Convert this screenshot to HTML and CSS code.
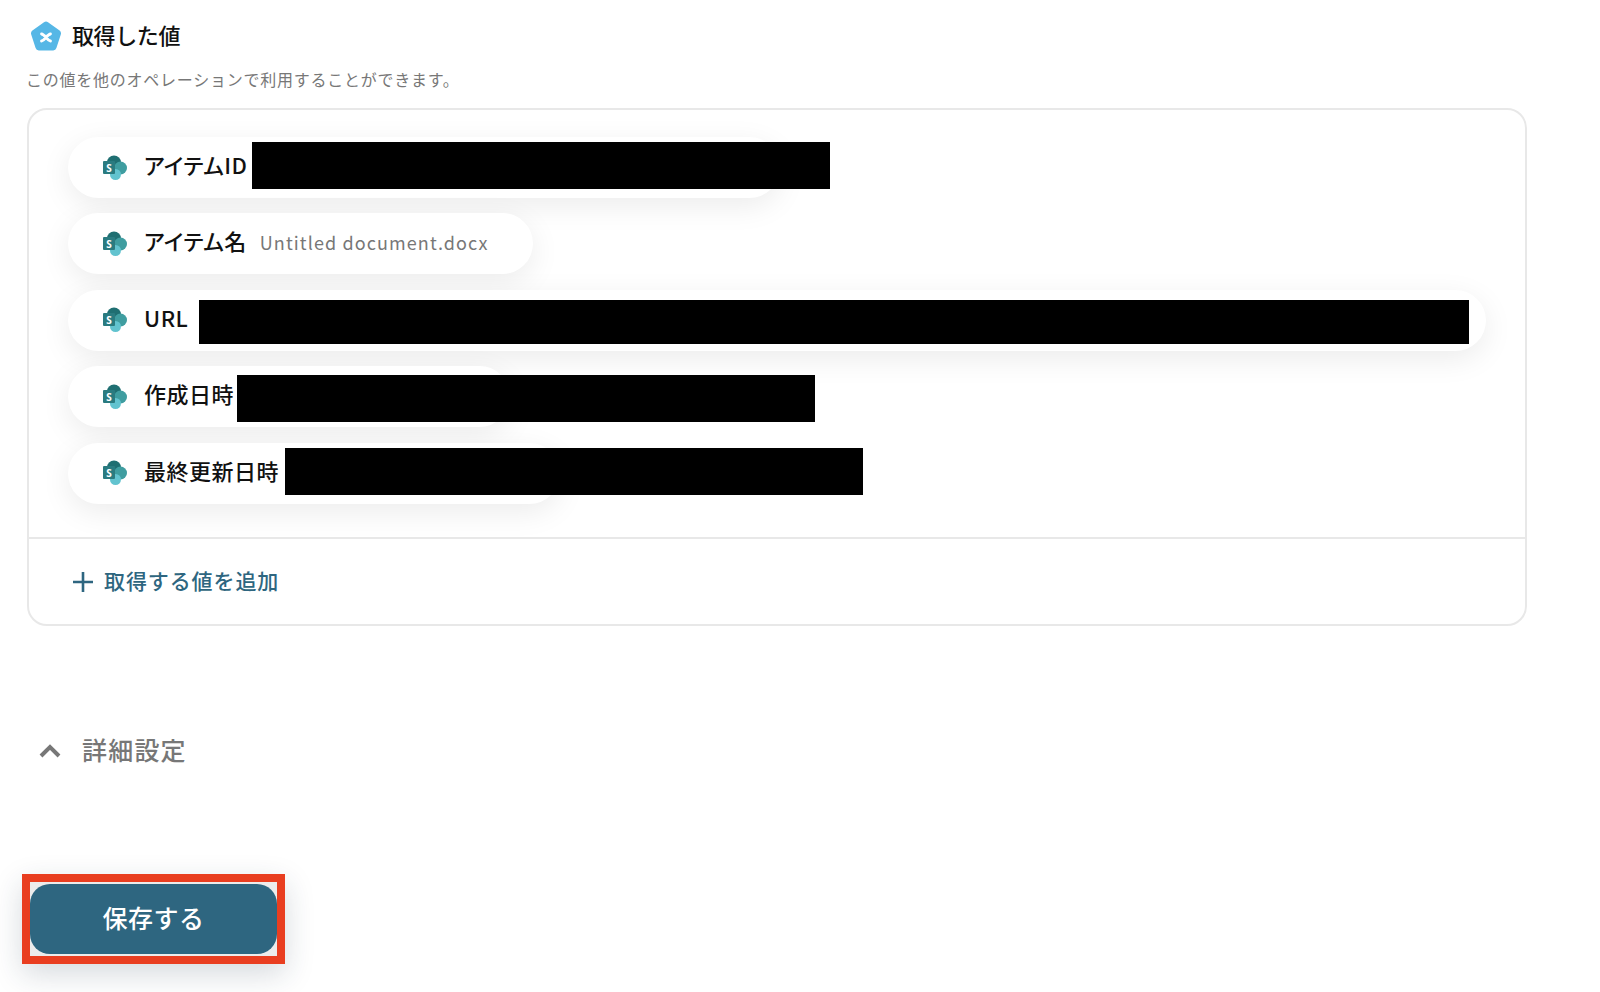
FILE: index.html
```html
<!doctype html>
<html lang="ja">
<head>
    <meta charset="utf-8">
    <title>取得した値</title>
    <link rel="stylesheet" href="styles.css">
</head>
<body>

<main class="page">
    <header class="section-head">
        <svg class="var-icon" viewBox="0 0 32 31">
            <path d="M14 1.200a3.400 3.400 0 0 1 4 0l11.600 8.400a3.400 3.400 0 0 1 1.200 3.800l-4.400 13.600a3.400 3.400 0 0 1-3.200 2.400H8.800a3.400 3.400 0 0 1-3.200-2.400L1.200 13.400a3.400 3.400 0 0 1 1.200-3.800z" fill="#56b7e6"/>
            <path d="M11.500 13c3.500.5 5.500 6.500 9 7M20.500 13c-3.500.5-5.500 6.500-9 7" fill="none" stroke="#fff" stroke-width="2.800" stroke-linecap="round"/>
        </svg>
        <h2>取得した値</h2>
    </header>
    <p class="hint">この値を他のオペレーションで利用することができます。</p>

    <section class="card">
        <div class="pills">
            <div class="pill pill-id">
                <svg class="sp" viewBox="0 0 26 26">
                    <circle cx="12" cy="7.500" r="7" fill="#1f6f72"/>
                    <circle cx="18.500" cy="13" r="6.500" fill="#3f9da0"/>
                    <circle cx="13.500" cy="19.500" r="5.500" fill="#62c3cf"/>
                    <rect x="1" y="6" width="12" height="13" rx="1" fill="#2a7b80"/>
                    <text x="7" y="16.500" class="sp-letter">S</text>
                </svg>
                <span class="label">アイテムID</span>
                <span class="redact redact-id"></span>
            </div>
            <div class="pill pill-name">
                <svg class="sp" viewBox="0 0 26 26">
                    <circle cx="12" cy="7.500" r="7" fill="#1f6f72"/>
                    <circle cx="18.500" cy="13" r="6.500" fill="#3f9da0"/>
                    <circle cx="13.500" cy="19.500" r="5.500" fill="#62c3cf"/>
                    <rect x="1" y="6" width="12" height="13" rx="1" fill="#2a7b80"/>
                    <text x="7" y="16.500" class="sp-letter">S</text>
                </svg>
                <span class="label">アイテム名</span>
                <span class="value">Untitled document.docx</span>
            </div>
            <div class="pill pill-url">
                <svg class="sp" viewBox="0 0 26 26">
                    <circle cx="12" cy="7.500" r="7" fill="#1f6f72"/>
                    <circle cx="18.500" cy="13" r="6.500" fill="#3f9da0"/>
                    <circle cx="13.500" cy="19.500" r="5.500" fill="#62c3cf"/>
                    <rect x="1" y="6" width="12" height="13" rx="1" fill="#2a7b80"/>
                    <text x="7" y="16.500" class="sp-letter">S</text>
                </svg>
                <span class="label">URL</span>
                <span class="redact redact-url"></span>
            </div>
            <div class="pill pill-created">
                <svg class="sp" viewBox="0 0 26 26">
                    <circle cx="12" cy="7.500" r="7" fill="#1f6f72"/>
                    <circle cx="18.500" cy="13" r="6.500" fill="#3f9da0"/>
                    <circle cx="13.500" cy="19.500" r="5.500" fill="#62c3cf"/>
                    <rect x="1" y="6" width="12" height="13" rx="1" fill="#2a7b80"/>
                    <text x="7" y="16.500" class="sp-letter">S</text>
                </svg>
                <span class="label">作成日時</span>
                <span class="redact redact-created"></span>
            </div>
            <div class="pill pill-updated">
                <svg class="sp" viewBox="0 0 26 26">
                    <circle cx="12" cy="7.500" r="7" fill="#1f6f72"/>
                    <circle cx="18.500" cy="13" r="6.500" fill="#3f9da0"/>
                    <circle cx="13.500" cy="19.500" r="5.500" fill="#62c3cf"/>
                    <rect x="1" y="6" width="12" height="13" rx="1" fill="#2a7b80"/>
                    <text x="7" y="16.500" class="sp-letter">S</text>
                </svg>
                <span class="label">最終更新日時</span>
                <span class="redact redact-updated"></span>
            </div>
        </div>
        <div class="card-foot">
            <svg class="plus" viewBox="0 0 20 20">
                <path d="M10 0v20M0 10h20" stroke="#2e6680" stroke-width="2.600"/>
            </svg>
            <span class="lift">取得する値を追加</span>
        </div>
    </section>

    <div class="details">
        <svg class="chevron" viewBox="0 0 22 14">
            <path d="M2 12l9-9 9 9" fill="none" stroke="#777" stroke-width="4"/>
        </svg>
        <span class="lift">詳細設定</span>
    </div>

    <div class="save-mark">
        <button class="save" type="button"><span class="lift">保存する</span></button>
    </div>
</main>

</body>
</html>
```

FILE: styles.css
```css
*, *:before, *:after {
    box-sizing: border-box;
    margin: 0;
    padding: 0;
}

body {
    font-family: "Noto Sans CJK JP", "Noto Sans", sans-serif;
    background: #fff;
    color: #111;
    height: 992px;
    overflow: hidden;
}

.sp-letter {
    font-family: "Noto Sans", sans-serif;
    font-size: 10px;
    font-weight: 700;
    fill: #fff;
    text-anchor: middle;
}

/* Noto sits low in its line box, this pulls the text back up */
.lift {
    display: block;
    padding-bottom: 4px;
}

.page {
    padding: 21px 0 0 27px;
    width: 1527px;
}

.section-head {
    display: flex;
    align-items: center;
    gap: 10px;
    padding-left: 3px;
    height: 31px;
}

.var-icon {
    width: 32px;
    height: 31px;
}

.section-head h2 {
    font-size: 22px;
    font-weight: 500;
    letter-spacing: -0.4px;
    padding-bottom: 6px;
}

.hint {
    margin-top: 16px;
    margin-left: -1px;
    font-size: 16px;
    line-height: 22px;
    color: #777;
    letter-spacing: 0.75px;
}

.card {
    margin-top: 18px;
    height: 518px;
    border: 2px solid #e8e8e8;
    border-radius: 20px;
    display: flex;
    flex-direction: column;
}

.pills {
    height: 429px;
    padding: 27px 39px 0;
    display: flex;
    flex-direction: column;
    align-items: flex-start;
    gap: 15.4px;
    border-bottom: 2px solid #e8e8e8;
}

.pill {
    position: relative;
    flex: none;
    display: flex;
    align-items: center;
    height: 61px;
    padding-left: 34px;
    border-radius: 31px;
    background: #fff;
    box-shadow: 0 8px 30px rgba(0, 0, 0, 0.08);
}

.pill-id { width: 712px; }
.pill-name { width: 465px; }
.pill-url { width: 1418px; }
.pill-created { width: 442px; }
.pill-updated { width: 492px; }

.sp {
    width: 26px;
    height: 26px;
    flex: none;
}

.label {
    margin-left: 16px;
    padding-bottom: 7px;
    font-size: 22px;
    font-weight: 500;
    font-feature-settings: "palt";
    letter-spacing: 0.5px;
    white-space: nowrap;
}

.value {
    margin-left: 13px;
    padding-bottom: 3px;
    font-size: 18px;
    color: #777;
    letter-spacing: 1.1px;
    white-space: nowrap;
}

/* black boxes that were painted over the screenshot */
.redact {
    position: absolute;
    background: #000;
}

.redact-id { left: 184px; top: 5px; width: 578px; height: 47px; }
.redact-url { left: 131px; top: 10px; width: 1270px; height: 44px; }
.redact-created { left: 169px; top: 9px; width: 578px; height: 47px; }
.redact-updated { left: 217px; top: 5px; width: 578px; height: 47px; }

.card-foot {
    flex: 1;
    display: flex;
    align-items: center;
    gap: 11px;
    padding-left: 44px;
    color: #2e6680;
    font-size: 21px;
    font-weight: 500;
    letter-spacing: 0.9px;
}

.plus {
    width: 20px;
    height: 20px;
}

.details {
    margin-top: 105px;
    padding-left: 12px;
    display: flex;
    align-items: center;
    gap: 21px;
    color: #777;
    font-size: 25px;
    font-weight: 500;
    letter-spacing: 1.2px;
}

.chevron {
    width: 22px;
    height: 14px;
}

.save-mark {
    position: absolute;
    left: 22px;
    top: 874px;
    width: 263px;
    height: 90px;
    border: 8px solid #e93e20;
    background: #ececec;
    box-shadow: 0 10px 30px rgba(30, 50, 70, 0.18);
    display: flex;
    align-items: center;
}

.save {
    width: 100%;
    height: 70px;
    border: none;
    border-radius: 20px;
    background: #2e6680;
    color: #fff;
    font-family: inherit;
    font-size: 25px;
    font-weight: 500;
    letter-spacing: 0.5px;
}
```
